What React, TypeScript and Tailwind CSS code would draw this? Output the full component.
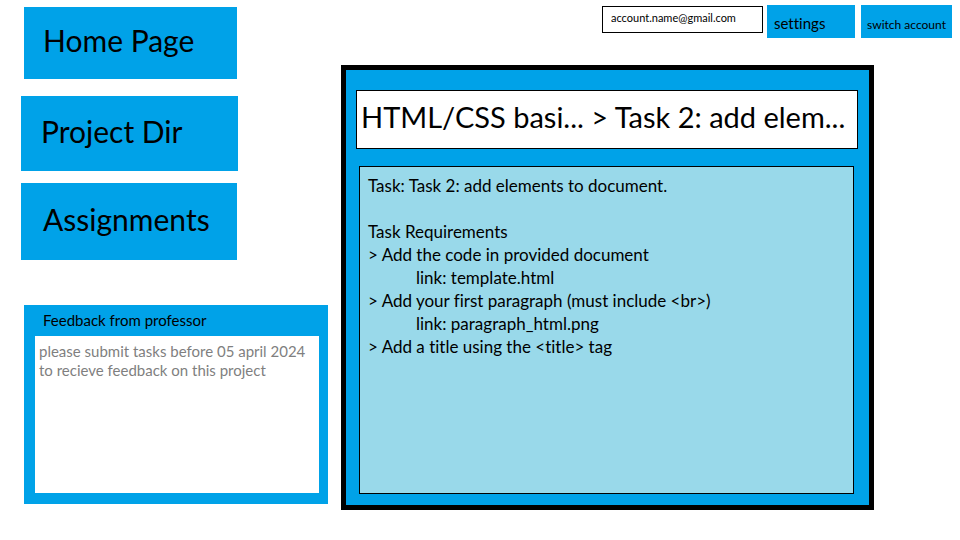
type NavItem = { label: string; className: string };

const navItems: NavItem[] = [
  { label: 'Home Page', className: 'ml-[3px] mr-[1px] h-[72px] pl-[19px] pb-[6px]' },
  { label: 'Project Dir', className: 'mt-[17px] h-[75px] pl-5 pb-[6px]' },
  { label: 'Assignments', className: 'mt-3 mr-[1px] h-[77px] pl-[22px] pb-[6px]' },
];

function Sidebar() {
  return (
    <aside className="w-[307px] shrink-0 pt-[7px]">
      <nav className="flex w-[217px] flex-col">
        {navItems.map((item) => (
          <button
            key={item.label}
            type="button"
            className={`bg-[#00a2e8] text-left text-[30px] leading-9 ${item.className}`}
          >
            {item.label}
          </button>
        ))}
      </nav>
      <section className="mt-[45px] ml-[3px] bg-[#00a2e8] pt-[5px] pr-[9px] pb-[11px] pl-[11px]">
        <label htmlFor="feedback" className="mb-[6px] block pl-2 text-[15px] leading-5">
          Feedback from professor
        </label>
        <textarea
          id="feedback"
          readOnly
          className="block h-[157px] w-full resize-none bg-white px-1 py-[6px] text-[15px] leading-[19px] text-[#7f7f7f] outline-none"
          defaultValue={'please submit tasks before 05 april 2024\nto recieve feedback on this project'}
        />
      </section>
    </aside>
  );
}

function AccountBar() {
  return (
    <header className="flex items-start justify-end pt-[5px] pr-2">
      <input
        type="email"
        aria-label="Account"
        readOnly
        defaultValue="account.name@gmail.com"
        className="mt-px mr-1 h-[27px] w-[161px] border border-black bg-white pr-2 pb-1 pl-2 text-[11px] outline-none"
      />
      <button type="button" className="mr-[6px] h-[33px] w-[88px] bg-[#00a2e8] pt-[3px] pl-[7px] text-left text-[15px] leading-5">
        settings
      </button>
      <button type="button" className="h-[33px] w-[91px] bg-[#00a2e8] pt-[6px] text-center text-xs leading-5 whitespace-nowrap">
        switch account
      </button>
    </header>
  );
}

function TaskPanel() {
  return (
    <main className="mt-[27px] mr-[86px] border-[5px] border-black bg-[#00a2e8] px-[10px] pt-5 pb-[11px]">
      <h1 className="mr-[1px] border border-black bg-white pt-2 pb-[13px] pl-1 text-[29px] leading-9 whitespace-nowrap">
        HTML/CSS basi... &gt; Task 2: add elem...
      </h1>
      <section className="mt-[17px] mr-[5px] ml-[3px] min-h-[328px] border border-black bg-[#99d9ea] px-2 py-[7px] text-[17px] leading-[23px]">
        <p>Task: Task 2: add elements to document.</p>
        <h2 className="mt-[23px]">Task Requirements</h2>
        <ul>
          <li>
            &gt; Add the code in provided document
            <div className="pl-12">
              link: <a href="#template">template.html</a>
            </div>
          </li>
          <li>
            &gt; Add your first paragraph (must include &lt;br&gt;)
            <div className="pl-12">
              link: <a href="#paragraph">paragraph_html.png</a>
            </div>
          </li>
          <li>&gt; Add a title using the &lt;title&gt; tag</li>
        </ul>
      </section>
    </main>
  );
}

export default function App() {
  return (
    <div className="flex min-h-screen gap-[13px] bg-white pl-[21px] font-[Lato,'Open_Sans',sans-serif] text-black [font-variant-ligatures:none]">
      <Sidebar />
      <div className="min-w-0 flex-1">
        <AccountBar />
        <TaskPanel />
      </div>
    </div>
  );
}
